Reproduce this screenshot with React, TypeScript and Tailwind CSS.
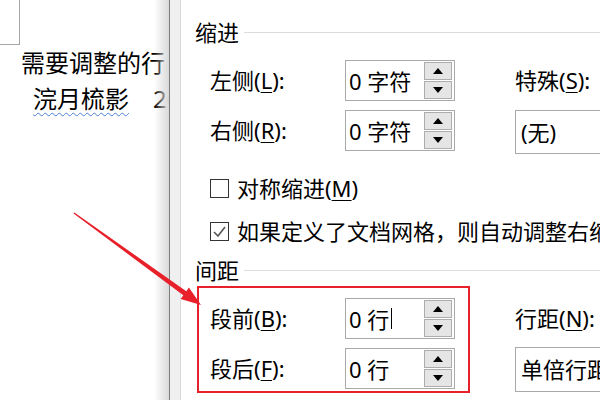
import React from "react";

const FONT = "font-['Noto_Sans','Noto_Sans_CJK_SC',sans-serif]";

function Up() {
  return (
    <svg width="10" height="6" viewBox="0 0 10 6">
      <polygon points="0,6 10,6 5,0" fill="#000" />
    </svg>
  );
}
function Down() {
  return (
    <svg width="10" height="6" viewBox="0 0 10 6">
      <polygon points="0,0 10,0 5,6" fill="#000" />
    </svg>
  );
}

function SpinBox({ value, cursor }: { value: string; cursor?: boolean }) {
  return (
    <div className="w-[110px] h-[41px] shrink-0 border border-[#a9a9a9] bg-white flex items-center">
      <div className="flex-1 pl-[3px] text-[22px] leading-[28px] flex items-center whitespace-nowrap">
        <span>{value}</span>
        {cursor && <span className="ml-[2px] w-px h-[21px] bg-black" />}
      </div>
      <div className="w-[28px] mr-[2px] flex flex-col gap-px shrink-0">
        <div className="h-[18px] border border-[#adadad] bg-[#e5e5e5] flex items-center justify-center">
          <Up />
        </div>
        <div className="h-[18px] border border-[#adadad] bg-[#e5e5e5] flex items-center justify-center">
          <Down />
        </div>
      </div>
    </div>
  );
}

function Label({ text, k }: { text: string; k: string }) {
  return (
    <span className="whitespace-nowrap">
      {text}(<span className="underline underline-offset-[3px] decoration-1">{k}</span>):
    </span>
  );
}

function Header({ text }: { text: string }) {
  return (
    <div className="h-[30px] flex items-center">
      <span className="text-[22px] leading-[30px] shrink-0">{text}</span>
      <div className="flex-1 h-px bg-[#dcdcdc] ml-[5px]" />
    </div>
  );
}

function Select({ text, tall }: { text: string; tall?: boolean }) {
  return (
    <div
      className={
        "w-[120px] shrink-0 border border-[#a9a9a9] bg-white flex items-center pl-[5px] text-[22px] whitespace-nowrap " +
        (tall ? "h-[45px] -mt-px" : "h-[44px]")
      }
    >
      {text}
    </div>
  );
}

function RowLabel({ text, k }: { text: string; k: string }) {
  return (
    <div className="w-[150px] shrink-0 pl-[15px] h-[41px] flex items-center text-[22px]">
      <Label text={text} k={k} />
    </div>
  );
}

export default function App() {
  return (
    <div className={"relative w-[600px] h-[400px] overflow-hidden bg-white flex text-black " + FONT}>
      {/* document */}
      <div className="relative w-[169px] shrink-0 overflow-hidden">
        <div className="w-[20px] h-[45px] border-r border-b border-[#a6a6a6]" />
        <div className="pl-[21px] text-[24px] leading-[36px] whitespace-nowrap">需要调整的行</div>
        <div className="pl-[33px] text-[24px] leading-[36px] whitespace-nowrap flex">
          <span className="underline decoration-wavy decoration-[#4a7fd6] decoration-1 underline-offset-[4px]">
            浣月梳影
          </span>
          <span className="ml-[24px]">2021</span>
        </div>
        <div className="absolute top-0 right-0 w-[15px] h-full bg-gradient-to-r from-white/0 to-[#d9d9d9]" />
      </div>
      <div className="w-px shrink-0 bg-[#7d7d7d]" />
      <div className="w-[10px] shrink-0 bg-[#f0f0f0]" />
      <div className="w-px shrink-0 bg-[#dadada]" />

      {/* dialog */}
      <div className="flex-1 min-w-0 overflow-hidden pl-[14px] pt-[17px] flex flex-col">
        <Header text="缩进" />

        <div className="mt-[13px] flex items-start">
          <RowLabel text="左侧" k="L" />
          <SpinBox value="0 字符" />
          <div className="ml-[60px] shrink-0 h-[41px] flex items-center text-[22px]">
            <Label text="特殊" k="S" />
          </div>
        </div>

        <div className="mt-[9px] flex items-start">
          <RowLabel text="右侧" k="R" />
          <SpinBox value="0 字符" />
          <div className="ml-[60px] shrink-0">
            <Select text="(无)" />
          </div>
        </div>

        <div className="mt-[25px] pl-[15px] h-[19px] flex items-center gap-[8px] text-[22px] whitespace-nowrap">
          <div className="w-[19px] h-[19px] border border-[#333] bg-white shrink-0" />
          <span>
            对称缩进(<span className="underline underline-offset-[3px] decoration-1">M</span>)
          </span>
        </div>

        <div className="mt-[24px] pl-[15px] h-[19px] flex items-center gap-[8px] text-[22px] whitespace-nowrap">
          <div className="w-[19px] h-[19px] border border-[#333] bg-white shrink-0 flex items-center justify-center">
            <svg width="13" height="11" viewBox="0 0 13 11">
              <polyline points="1,6 5,10 12,1" fill="none" stroke="#555" strokeWidth="1.6" />
            </svg>
          </div>
          <span className="shrink-0">如果定义了文档网格，则自动调整右缩进</span>
        </div>

        <div className="mt-[14px]">
          <Header text="间距" />
        </div>

        <div className="mt-[13px] flex items-start">
          <RowLabel text="段前" k="B" />
          <SpinBox value="0 行" cursor />
          <div className="ml-[60px] shrink-0 h-[41px] flex items-center text-[22px]">
            <Label text="行距" k="N" />
          </div>
        </div>

        <div className="mt-[9px] flex items-start">
          <RowLabel text="段后" k="F" />
          <SpinBox value="0 行" />
          <div className="ml-[60px] shrink-0">
            <Select text="单倍行距" tall />
          </div>
        </div>
      </div>

      {/* annotations */}
      <div className="absolute left-[197px] top-[286px] w-[273px] h-[107px] border-2 border-[#e8202a] pointer-events-none" />
      <svg className="absolute inset-0 pointer-events-none" width="600" height="400" viewBox="0 0 600 400">
        <polygon
          points="74.4,212.4 186.3,291.3 188.9,287.6 201,305 180.7,299 183.3,295.3 73.6,213.6"
          fill="#e8202a"
        />
      </svg>
    </div>
  );
}
